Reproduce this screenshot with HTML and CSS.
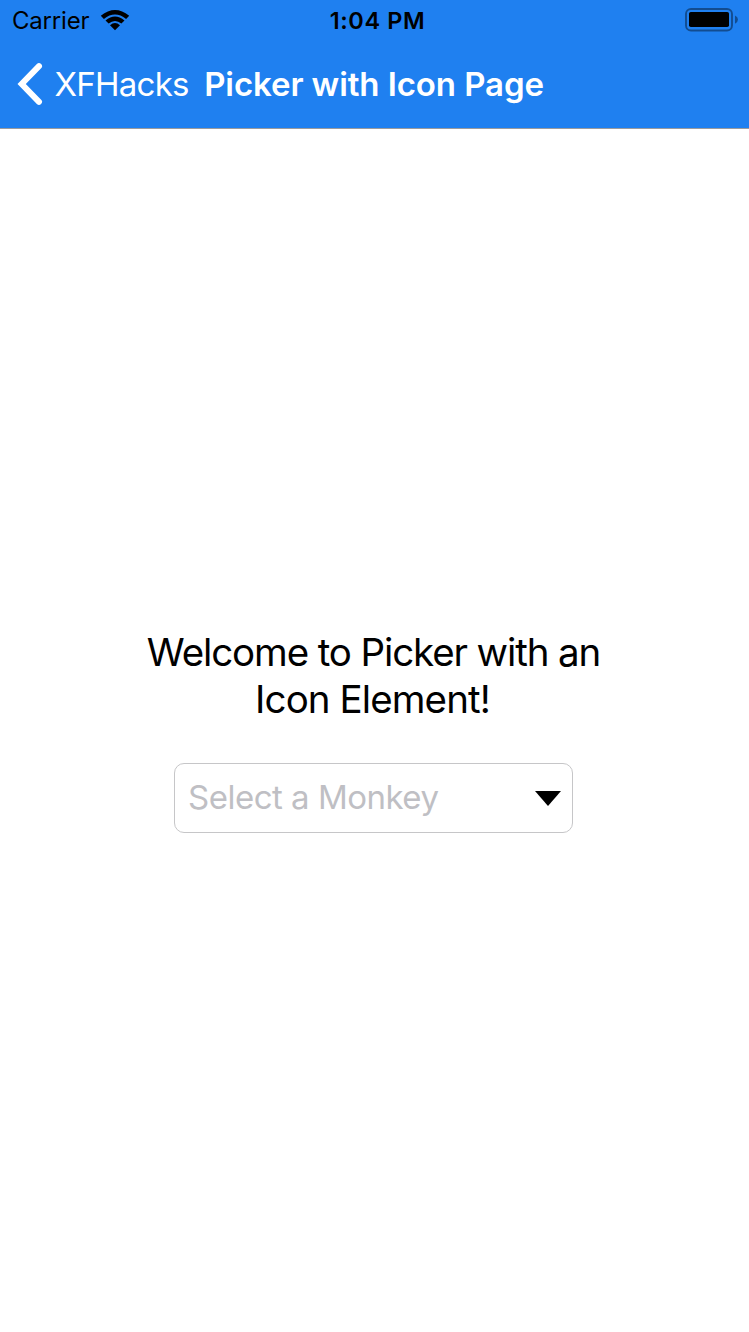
FILE: index.html
```html
<!DOCTYPE html>
<html lang="en"><head><meta charset="utf-8"><title>Picker with Icon Page</title><link rel="stylesheet" href="styles.css"></head>
<body>
<header class="top">
<div class="status">
<div class="carrier"><span class="t-carrier">Carrier</span>
<svg class="wifi" width="30" height="22" viewBox="0 0 30 22"><path d="M.8 6.800Q15-5 29.200 6.800L26.100 9.900Q15 1.200 3.900 9.900Z"/><path d="M5.500 11.500Q15 3.500 24.500 11.500L21.400 14.600Q15 9.600 8.600 14.600Z"/><path d="M10 16.200Q15 11.800 20 16.200L15 21.200Z"/></svg></div>
<span class="t-time">1:04 PM</span>
<svg class="battery" width="54" height="24" viewBox="0 0 54 24"><rect x="1" y="1" width="46" height="21.500" rx="5" fill="none" stroke="#124c90" stroke-width="1.900"/><rect x="4" y="4" width="40" height="15" rx="1.800"/><path d="M50 7.500Q53 9 53 11.500T50 15.800Z" fill="#124c90"/></svg>
</div>
<nav class="nav">
<svg class="chevron" width="26" height="42" viewBox="0 0 26 42"><path d="M22 3.200 4.700 21 22 38.800" fill="none" stroke="#fff" stroke-width="6" stroke-linecap="round" stroke-linejoin="miter"/></svg>
<span class="t-back">XFHacks</span><h1 class="t-title">Picker with Icon Page</h1>
</nav>
</header>
<main class="content">
<p class="welcome"><span class="w1">Welcome to Picker with an</span><br><span class="w2">Icon Element!</span></p>
<div class="picker"><span class="t-pick">Select a Monkey</span><svg class="arrow" width="28" height="17" viewBox="0 0 28 17"><path d="M1 1H27L14 16Z"/></svg></div>
</main>
</body></html>
```
FILE: styles.css
```css
*{box-sizing:border-box}
body{margin:0;width:749px;height:1332px;background:#fff;color:#000;font-family:Inter,sans-serif;overflow:hidden}
svg{display:block;flex:none}
span,h1{white-space:nowrap}
.top{height:129px;background:#1f80f0;border-bottom:1px solid #999b9e}
.status{height:40px;display:grid;grid-template-columns:1fr auto 1fr;align-items:center;padding:0 10px 0 12px}
.carrier{display:flex;align-items:center;gap:11px}
.t-carrier{font-size:24px;letter-spacing:-.2px}
.t-time{font-size:23.500px;font-weight:600;letter-spacing:.6px;margin:0 -2px 0 2px}
.battery{justify-self:end}
.nav{height:88px;display:flex;align-items:center;padding-left:17px;color:#fff}
.t-back{font-size:33px;margin-left:11.500px;letter-spacing:-.75px}
.t-title{font-size:33px;font-weight:600;margin:0 0 0 15.500px;letter-spacing:-.1px}
.content{padding-top:500px;display:flex;flex-direction:column;align-items:center}
.welcome{margin:0 2px 0 0;font-size:38.500px;line-height:47px;text-align:center;letter-spacing:-1.120px}
.w2{letter-spacing:-.9px;margin-right:2px}
.picker{width:399px;height:70px;margin:40px 2px 0 0;border:1px solid #c6c6c8;border-radius:10px;display:flex;align-items:center;justify-content:space-between;padding:0 10px 0 13px}
.t-pick{font-size:33px;color:#bfbfc4;letter-spacing:-.5px;padding-bottom:2px}
```
